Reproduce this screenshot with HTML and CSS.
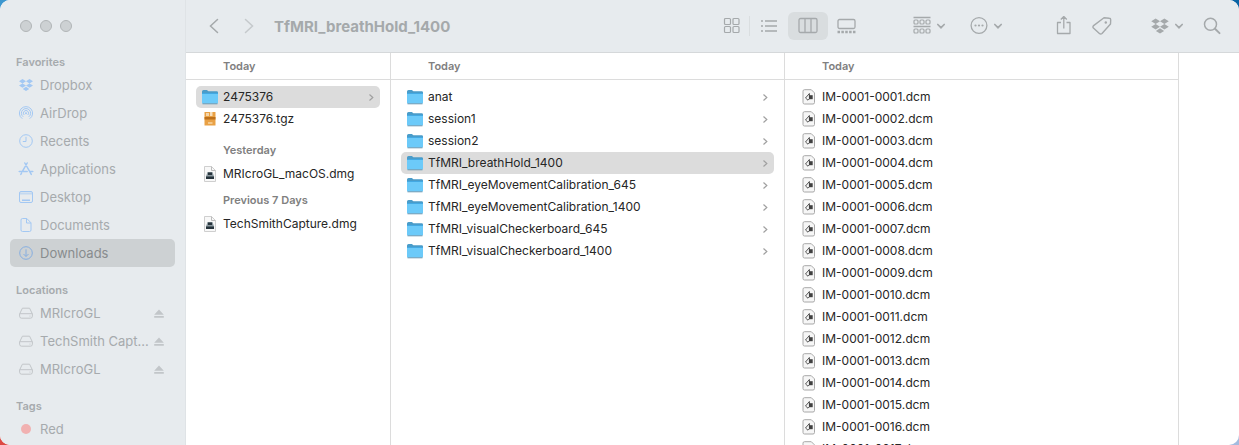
FILE: index.html
```
<!DOCTYPE html>
<html lang="en">
  <head>
    <meta charset="UTF-8" />
    <meta name="viewport" content="width=device-width, initial-scale=1.0" />
    <title>TfMRI_breathHold_1400</title>
    <link rel="stylesheet" href="styles.css">
  </head>
  <body>
    <!-- Icon sprites -->
    <svg class="sprites" aria-hidden="true">
      <symbol id="dropbox" viewBox="0 0 16 16">
        <path fill="currentColor" d="M4.500 2 8 4.200 4.500 6.400 1 4.200zM11.500 2 15 4.200 11.500 6.400 8 4.200zM4.500 6.400 8 8.600 4.500 10.800 1 8.600zM11.500 6.400 15 8.600 11.500 10.800 8 8.600zM8 9.800 11.300 11.900 8 14 4.700 11.900z" />
      </symbol>
      <symbol id="airdrop" viewBox="0 0 16 16">
        <g fill="none" stroke="currentColor">
          <path d="M4.300 13.700a6.600 6.600 0 1 1 7.400 0" />
          <path d="M5.200 11.800a4.600 4.600 0 1 1 5.600 0" />
          <path d="M6.200 10a2.600 2.600 0 1 1 3.600 0" />
        </g>
        <circle cx="8" cy="8.200" r="1" fill="currentColor" />
      </symbol>
      <symbol id="clock" viewBox="0 0 16 16">
        <circle cx="8" cy="8" r="6.300" fill="none" stroke="currentColor" />
        <path d="M8 3.800V8.500H4.800" fill="none" stroke="currentColor" />
      </symbol>
      <symbol id="apps" viewBox="0 0 16 16">
        <path d="M9.200 2 4.800 9.700M3.600 12l-.8 1.400M6.800 2l6.500 11.400M1.200 10.500h8M12 10.500h2.800" fill="none" stroke="currentColor" stroke-width="1.500" stroke-linecap="round" />
      </symbol>
      <symbol id="desktop" viewBox="0 0 16 16">
        <rect x="1.500" y="2.500" width="13" height="11" rx="1.500" fill="none" stroke="currentColor" />
        <path d="M2 4.500h12" stroke="currentColor" stroke-width="2" opacity=".5" />
        <path d="M4 11.200h8" stroke="currentColor" stroke-width="1.500" />
      </symbol>
      <symbol id="document" viewBox="0 0 16 16">
        <path d="M4.500 1.500h4.300l4.200 4.300v7.200a1.500 1.500 0 0 1-1.500 1.500h-7A1.500 1.500 0 0 1 3 13V3a1.500 1.500 0 0 1 1.500-1.500zM8.500 1.500V6H13" fill="none" stroke="currentColor" />
      </symbol>
      <symbol id="download" viewBox="0 0 16 16">
        <circle cx="8" cy="8" r="6.300" fill="none" stroke="currentColor" />
        <path d="M8 4.300v7M5.500 9 8 11.500 10.500 9" fill="none" stroke="currentColor" />
      </symbol>
      <symbol id="disk" viewBox="0 0 16 16">
        <path d="M4.400 3.200h7.200L14.400 9v2.200a2 2 0 0 1-2 2H3.600a2 2 0 0 1-2-2V9zM1.800 8.700h12.400" fill="none" stroke="currentColor" />
        <circle cx="12" cy="11" r=".6" fill="currentColor" />
      </symbol>
      <symbol id="eject" viewBox="0 0 12 12">
        <path d="M6 2.500 10.800 7.700H1.200zM1.200 9h9.600v1.800H1.200z" fill="currentColor" />
      </symbol>
      <symbol id="chevron" viewBox="0 0 10 10">
        <path d="m3.500 2.500 3.300 3-3.300 3" fill="none" stroke="currentColor" stroke-width="1.200" />
      </symbol>
      <symbol id="caret" viewBox="0 0 10 10">
        <path d="M1.800 3.500 5 6.700l3.200-3.200" fill="none" stroke="currentColor" stroke-width="1.700" stroke-linecap="round" />
      </symbol>
      <symbol id="folder" viewBox="0 0 18 16">
        <path d="M1 2.500A1.500 1.500 0 0 1 2.500 1h3.400l1.500 1.300h8.300A1.300 1.300 0 0 1 17 3.600V5H1z" fill="#4a9cc9" />
        <path d="M1 4h16v9.600a1.200 1.200 0 0 1-1.200 1.200H2.200A1.200 1.200 0 0 1 1 13.600z" fill="#6ccaf9" />
        <path d="M1 4.500h16" stroke="#43a9e3" />
        <path d="M1.500 14.800h15" stroke="#6f9bb3" />
      </symbol>
      <symbol id="archive" viewBox="0 0 18 16">
        <path d="M3.500 1h11v13.500h-11z" fill="#e9a145" />
        <path d="M3.500 6h11v2.500h-11z" fill="#bd701a" />
        <path d="M5 2h3v3H5z" fill="#f5d6aa" />
        <path d="M9 1h2.500v4H9z" fill="#f7dfbc" />
        <path d="M7 11h4.500v2H7z" fill="#f3c88b" />
      </symbol>
      <symbol id="image" viewBox="0 0 18 16">
        <path d="M3.500.5h7l4 4v11h-11z" fill="#f8f8f8" stroke="#cfcfcf" />
        <path d="M10.500.5v4h4" fill="none" stroke="#bdbdbd" />
        <path d="M6.500 6h5l1.500 4.500v2.500H5v-2.500z" fill="#8b989f" />
        <path d="M7 6.500h4v2.500H7zM5 10.500h8v2.500H5z" fill="#27343c" />
      </symbol>
      <symbol id="dicom" viewBox="0 0 18 16">
        <path d="M4.500.7h6.800l3.200 3.200v9.600a1.500 1.500 0 0 1-1.500 1.500H4.500A1.500 1.500 0 0 1 3 13.500V2.200A1.500 1.500 0 0 1 4.500.7z" fill="#f6f6f6" stroke="#a8a8a8" />
        <path d="M5.500 9 9.400 4.500v5.200L8 11.200z" fill="#f6f6f6" stroke="#555" stroke-linejoin="round" />
        <path d="M9 6.200h3.700v4H9z" fill="#404040" />
      </symbol>
      <symbol id="back" viewBox="0 0 20 20">
        <path d="m13.500 3.500-7 6.500 7 6.500" fill="none" stroke="currentColor" stroke-width="1.500" stroke-linecap="round" />
      </symbol>
      <symbol id="forward" viewBox="0 0 20 20">
        <path d="m6.500 3.500 7 6.500-7 6.500" fill="none" stroke="currentColor" stroke-width="1.500" stroke-linecap="round" />
      </symbol>
      <symbol id="grid" viewBox="0 0 20 20">
        <g fill="none" stroke="currentColor" stroke-width="1.200">
          <rect x="3.500" y="2.500" width="6" height="6" rx="1" />
          <rect x="12" y="2.500" width="6" height="6" rx="1" />
          <rect x="3.500" y="10.500" width="6" height="6" rx="1" />
          <rect x="12" y="10.500" width="6" height="6" rx="1" />
        </g>
      </symbol>
      <symbol id="list" viewBox="0 0 20 20">
        <path d="M6 5h12M6 10h12M6 15h12M2 5h2M2 10h2M2 15h2" stroke="currentColor" stroke-width="1.400" />
      </symbol>
      <symbol id="columns" viewBox="0 0 20 20">
        <path d="M2.500 2.500h15a1.500 1.500 0 0 1 1.500 1.500v11a1.500 1.500 0 0 1-1.500 1.500h-15A1.500 1.500 0 0 1 1 15V4a1.500 1.500 0 0 1 1.500-1.500zM7 2.500v14M13 2.500v14" fill="none" stroke="currentColor" stroke-width="1.300" />
      </symbol>
      <symbol id="gallery" viewBox="0 0 20 20">
        <rect x="1" y="3.500" width="17" height="9" rx="1.500" fill="none" stroke="currentColor" stroke-width="1.300" />
        <path d="M.500 16h18" stroke="currentColor" stroke-width="2.500" stroke-dasharray="2.500 1.370" />
      </symbol>
      <symbol id="group" viewBox="0 0 20 20">
        <path d="M1.500 1.500h17M1.500 10.500h17" stroke="currentColor" stroke-width="1.300" />
        <g fill="none" stroke="currentColor" stroke-width="1.200">
          <rect x="2" y="4" width="4" height="4" rx="1" />
          <rect x="8" y="4" width="4" height="4" rx="1" />
          <rect x="14" y="4" width="4" height="4" rx="1" />
          <rect x="2" y="13" width="4" height="4" rx="1" />
          <rect x="8" y="13" width="4" height="4" rx="1" />
          <rect x="14" y="13" width="4" height="4" rx="1" />
        </g>
      </symbol>
      <symbol id="more" viewBox="0 0 20 20">
        <circle cx="10" cy="9.500" r="7.900" fill="none" stroke="currentColor" stroke-width="1.300" />
        <g fill="currentColor">
          <circle cx="6.500" cy="9.500" r="1.100" />
          <circle cx="10" cy="9.500" r="1.100" />
          <circle cx="13.500" cy="9.500" r="1.100" />
        </g>
      </symbol>
      <symbol id="share" viewBox="0 0 20 20">
        <path d="M7 6.500H3.500v11h12.500v-11h-3.500M9.800 12.500V.8M6.800 3.500l3-3 3 3" fill="none" stroke="currentColor" stroke-width="1.300" stroke-linejoin="round" />
      </symbol>
      <symbol id="tag" viewBox="0 0 20 20">
        <path d="M12 1.800 17.300 2.300a1.500 1.500 0 0 1 1.400 1.500L18.500 8 10 17.500q-1.300 1.200-2.600 0L1.400 12q-1-1.200.2-2.400z" fill="none" stroke="currentColor" stroke-width="1.400" stroke-linejoin="round" />
        <circle cx="13.800" cy="6.500" r="1.200" fill="currentColor" />
      </symbol>
      <symbol id="search" viewBox="0 0 20 20">
        <circle cx="8.500" cy="8.300" r="6" fill="none" stroke="currentColor" stroke-width="1.500" />
        <path d="m13 12.800 4.500 4.300" stroke="currentColor" stroke-width="2" stroke-linecap="round" />
      </symbol>
    </svg>

    <div class="window">
      <aside class="sidebar">
        <div class="lights">
          <button aria-label="Close"></button>
          <button aria-label="Minimize"></button>
          <button aria-label="Zoom"></button>
        </div>
        <nav>
          <h2>Favorites</h2>
          <a href="#"><svg><use href="#dropbox" /></svg><span>Dropbox</span></a>
          <a href="#"><svg><use href="#airdrop" /></svg><span>AirDrop</span></a>
          <a href="#"><svg><use href="#clock" /></svg><span>Recents</span></a>
          <a href="#"><svg><use href="#apps" /></svg><span>Applications</span></a>
          <a href="#"><svg><use href="#desktop" /></svg><span>Desktop</span></a>
          <a href="#"><svg><use href="#document" /></svg><span>Documents</span></a>
          <a href="#" class="active"><svg><use href="#download" /></svg><span>Downloads</span></a>
          <h2>Locations</h2>
          <a href="#" class="disk"><svg><use href="#disk" /></svg><span>MRIcroGL</span><svg class="eject"><use href="#eject" /></svg></a>
          <a href="#" class="disk"><svg><use href="#disk" /></svg><span>TechSmith Capt...</span><svg class="eject"><use href="#eject" /></svg></a>
          <a href="#" class="disk"><svg><use href="#disk" /></svg><span>MRIcroGL</span><svg class="eject"><use href="#eject" /></svg></a>
          <h2>Tags</h2>
          <a href="#"><i class="dot"></i><span>Red</span></a>
        </nav>
      </aside>

      <main>
        <header class="toolbar">
          <div class="history">
            <button aria-label="Back"><svg><use href="#back" /></svg></button>
            <button aria-label="Forward" disabled><svg><use href="#forward" /></svg></button>
          </div>
          <h1>TfMRI_breathHold_1400</h1>
          <div class="views">
            <button aria-label="Icons" class="divided"><svg><use href="#grid" /></svg></button>
            <button aria-label="List"><svg><use href="#list" /></svg></button>
            <button aria-label="Columns" class="active"><svg><use href="#columns" /></svg></button>
            <button aria-label="Gallery"><svg><use href="#gallery" /></svg></button>
          </div>
          <div class="menus">
            <button aria-label="Group"><svg><use href="#group" /></svg><svg class="caret"><use href="#caret" /></svg></button>
            <button aria-label="Actions"><svg><use href="#more" /></svg><svg class="caret"><use href="#caret" /></svg></button>
          </div>
          <div class="actions">
            <button aria-label="Share"><svg><use href="#share" /></svg></button>
            <button aria-label="Tags"><svg><use href="#tag" /></svg></button>
          </div>
          <div class="extras">
            <button aria-label="Dropbox"><svg><use href="#dropbox" /></svg><svg class="caret"><use href="#caret" /></svg></button>
            <button aria-label="Search"><svg><use href="#search" /></svg></button>
          </div>
        </header>

        <div class="columns">
          <section class="column">
            <h3 class="column-head">Today</h3>
            <div class="files">
              <a href="#" class="active"><svg><use href="#folder" /></svg><span>2475376</span><svg class="chevron"><use href="#chevron" /></svg></a>
              <a href="#"><svg><use href="#archive" /></svg><span>2475376.tgz</span></a>
            </div>
            <div class="files">
              <h3>Yesterday</h3>
              <a href="#"><svg><use href="#image" /></svg><span>MRIcroGL_macOS.dmg</span></a>
              <h3>Previous 7 Days</h3>
              <a href="#"><svg><use href="#image" /></svg><span>TechSmithCapture.dmg</span></a>
            </div>
          </section>

          <section class="column">
            <h3 class="column-head">Today</h3>
            <div class="files">
              <a href="#"><svg><use href="#folder" /></svg><span>anat</span><svg class="chevron"><use href="#chevron" /></svg></a>
              <a href="#"><svg><use href="#folder" /></svg><span>session1</span><svg class="chevron"><use href="#chevron" /></svg></a>
              <a href="#"><svg><use href="#folder" /></svg><span>session2</span><svg class="chevron"><use href="#chevron" /></svg></a>
              <a href="#" class="active"><svg><use href="#folder" /></svg><span>TfMRI_breathHold_1400</span><svg class="chevron"><use href="#chevron" /></svg></a>
              <a href="#"><svg><use href="#folder" /></svg><span>TfMRI_eyeMovementCalibration_645</span><svg class="chevron"><use href="#chevron" /></svg></a>
              <a href="#"><svg><use href="#folder" /></svg><span>TfMRI_eyeMovementCalibration_1400</span><svg class="chevron"><use href="#chevron" /></svg></a>
              <a href="#"><svg><use href="#folder" /></svg><span>TfMRI_visualCheckerboard_645</span><svg class="chevron"><use href="#chevron" /></svg></a>
              <a href="#"><svg><use href="#folder" /></svg><span>TfMRI_visualCheckerboard_1400</span><svg class="chevron"><use href="#chevron" /></svg></a>
            </div>
          </section>

          <section class="column">
            <h3 class="column-head">Today</h3>
            <div class="files">
              <a href="#"><svg><use href="#dicom" /></svg><span>IM-0001-0001.dcm</span></a>
              <a href="#"><svg><use href="#dicom" /></svg><span>IM-0001-0002.dcm</span></a>
              <a href="#"><svg><use href="#dicom" /></svg><span>IM-0001-0003.dcm</span></a>
              <a href="#"><svg><use href="#dicom" /></svg><span>IM-0001-0004.dcm</span></a>
              <a href="#"><svg><use href="#dicom" /></svg><span>IM-0001-0005.dcm</span></a>
              <a href="#"><svg><use href="#dicom" /></svg><span>IM-0001-0006.dcm</span></a>
              <a href="#"><svg><use href="#dicom" /></svg><span>IM-0001-0007.dcm</span></a>
              <a href="#"><svg><use href="#dicom" /></svg><span>IM-0001-0008.dcm</span></a>
              <a href="#"><svg><use href="#dicom" /></svg><span>IM-0001-0009.dcm</span></a>
              <a href="#"><svg><use href="#dicom" /></svg><span>IM-0001-0010.dcm</span></a>
              <a href="#"><svg><use href="#dicom" /></svg><span>IM-0001-0011.dcm</span></a>
              <a href="#"><svg><use href="#dicom" /></svg><span>IM-0001-0012.dcm</span></a>
              <a href="#"><svg><use href="#dicom" /></svg><span>IM-0001-0013.dcm</span></a>
              <a href="#"><svg><use href="#dicom" /></svg><span>IM-0001-0014.dcm</span></a>
              <a href="#"><svg><use href="#dicom" /></svg><span>IM-0001-0015.dcm</span></a>
              <a href="#"><svg><use href="#dicom" /></svg><span>IM-0001-0016.dcm</span></a>
              <a href="#"><svg><use href="#dicom" /></svg><span>IM-0001-0017.dcm</span></a>
            </div>
          </section>
        </div>
      </main>
    </div>
  </body>
</html>
```
FILE: styles.css
```
* {
  box-sizing: border-box;
}
html {
  background: linear-gradient(90deg, #dc4a44 50%, #a3bbdf 50%);
}
body {
  margin: 0;
  font-family: Inter, "Liberation Sans", sans-serif;
  font-size: 12px;
  color: #262626;
  background: linear-gradient(90deg, #3d97cf, #0a64a4) no-repeat;
  background-size: 100% 50%;
}
.sprites {
  display: none;
}
h1,
h2,
h3 {
  margin: 0;
}
a {
  color: inherit;
  text-decoration: none;
}
button {
  padding: 0;
  border: none;
  background: none;
  color: inherit;
}
svg {
  flex: none;
  display: block;
}
.window {
  display: flex;
  height: 100vh;
  overflow: hidden;
  background: #fff;
  border-radius: 10px;
}

/* Sidebar */
.sidebar {
  flex: none;
  width: 186px;
  padding: 20px 10px 0;
  background: #e7ebee;
  border-right: 1px solid #dfe3e6;
  color: #a6aaad;
}
.lights {
  display: flex;
  gap: 8px;
  padding: 0 10px 21px;
}
.lights button {
  width: 12px;
  height: 12px;
  border: 1px solid #b1b5b7;
  border-radius: 50%;
  background: #cdd1d3;
}
.sidebar h2 {
  margin-top: 14px;
  padding-left: 6px;
  font-size: 11px;
  font-weight: 600;
  line-height: 18px;
}
.sidebar h2:first-child {
  margin-top: 0;
}
.sidebar a {
  display: flex;
  align-items: center;
  gap: 6px;
  height: 28px;
  padding: 0 10px 0 8px;
  border-radius: 5px;
  font-size: 13px;
}
.sidebar a.active {
  background: #cdd1d3;
  color: #888c8e;
}
.sidebar svg {
  width: 16px;
  height: 16px;
  color: #a3c8f3;
}
.sidebar .active svg {
  color: #86aee0;
}
.sidebar .disk svg {
  color: #c2c6c9;
}
.sidebar span {
  flex: 1;
  white-space: nowrap;
}
.sidebar svg.eject {
  width: 12px;
  height: 12px;
  margin-left: -6px;
}
.dot {
  width: 10px;
  height: 10px;
  margin: 0 3px;
  border-radius: 50%;
  background: #f1b1b1;
}

/* Toolbar */
main {
  flex: 1;
  min-width: 0;
  display: flex;
  flex-direction: column;
}
.toolbar {
  flex: none;
  display: flex;
  align-items: center;
  height: 53px;
  padding: 0 17px 0 18px;
  background: #e7ebee;
  border-bottom: 1px solid #d5d8da;
  color: #a5a9ab;
}
.toolbar button {
  display: flex;
  align-items: center;
  justify-content: center;
  gap: 4px;
}
.toolbar svg {
  width: 20px;
  height: 20px;
}
.toolbar svg.caret {
  width: 10px;
  height: 10px;
}
.toolbar button:disabled {
  opacity: 0.5;
}
.toolbar h1 {
  flex: 1;
  margin-left: 15px;
  font-size: 15px;
  font-weight: 700;
}
.history {
  display: flex;
  gap: 15px;
}
.views {
  display: flex;
  align-items: center;
  margin-right: 46px;
}
.views button {
  width: 38px;
  height: 28px;
}
.views .divided {
  height: 20px;
  border-right: 1px solid #dadee0;
}
.views .active {
  width: 40px;
  border-radius: 6px;
  background: #d9dddf;
}
.menus {
  display: flex;
  gap: 23px;
  margin-right: 51px;
}
.actions {
  display: flex;
  gap: 18px;
  margin-right: 38px;
}
.extras {
  display: flex;
  gap: 18px;
}

/* File columns */
.columns {
  flex: 1;
  min-height: 0;
  display: grid;
  grid-template-columns: 205fr 394fr 394fr 60fr;
}
.column {
  min-width: 0;
  overflow: hidden;
  border-right: 1px solid #dcdcdc;
}
h3 {
  padding: 2px 0 0 27px;
  color: #808080;
  font-size: 11px;
  font-weight: 600;
  line-height: 26px;
}
.column-head {
  margin-bottom: 6px;
  padding: 0 0 0 37px;
  border-bottom: 1px solid #dcdcdc;
}
.files {
  padding: 0 10px 5px;
}
.files a {
  display: flex;
  align-items: center;
  gap: 4px;
  height: 22px;
  padding: 0 4px 1px 5px;
  border-radius: 5px;
}
.files a.active {
  background: #dcdcdc;
}
.files svg {
  width: 18px;
  height: 16px;
}
.files span {
  flex: 1;
  overflow: hidden;
  text-overflow: ellipsis;
  white-space: nowrap;
}
.files svg.chevron {
  width: 10px;
  height: 10px;
  color: #a0a0a0;
}
```
